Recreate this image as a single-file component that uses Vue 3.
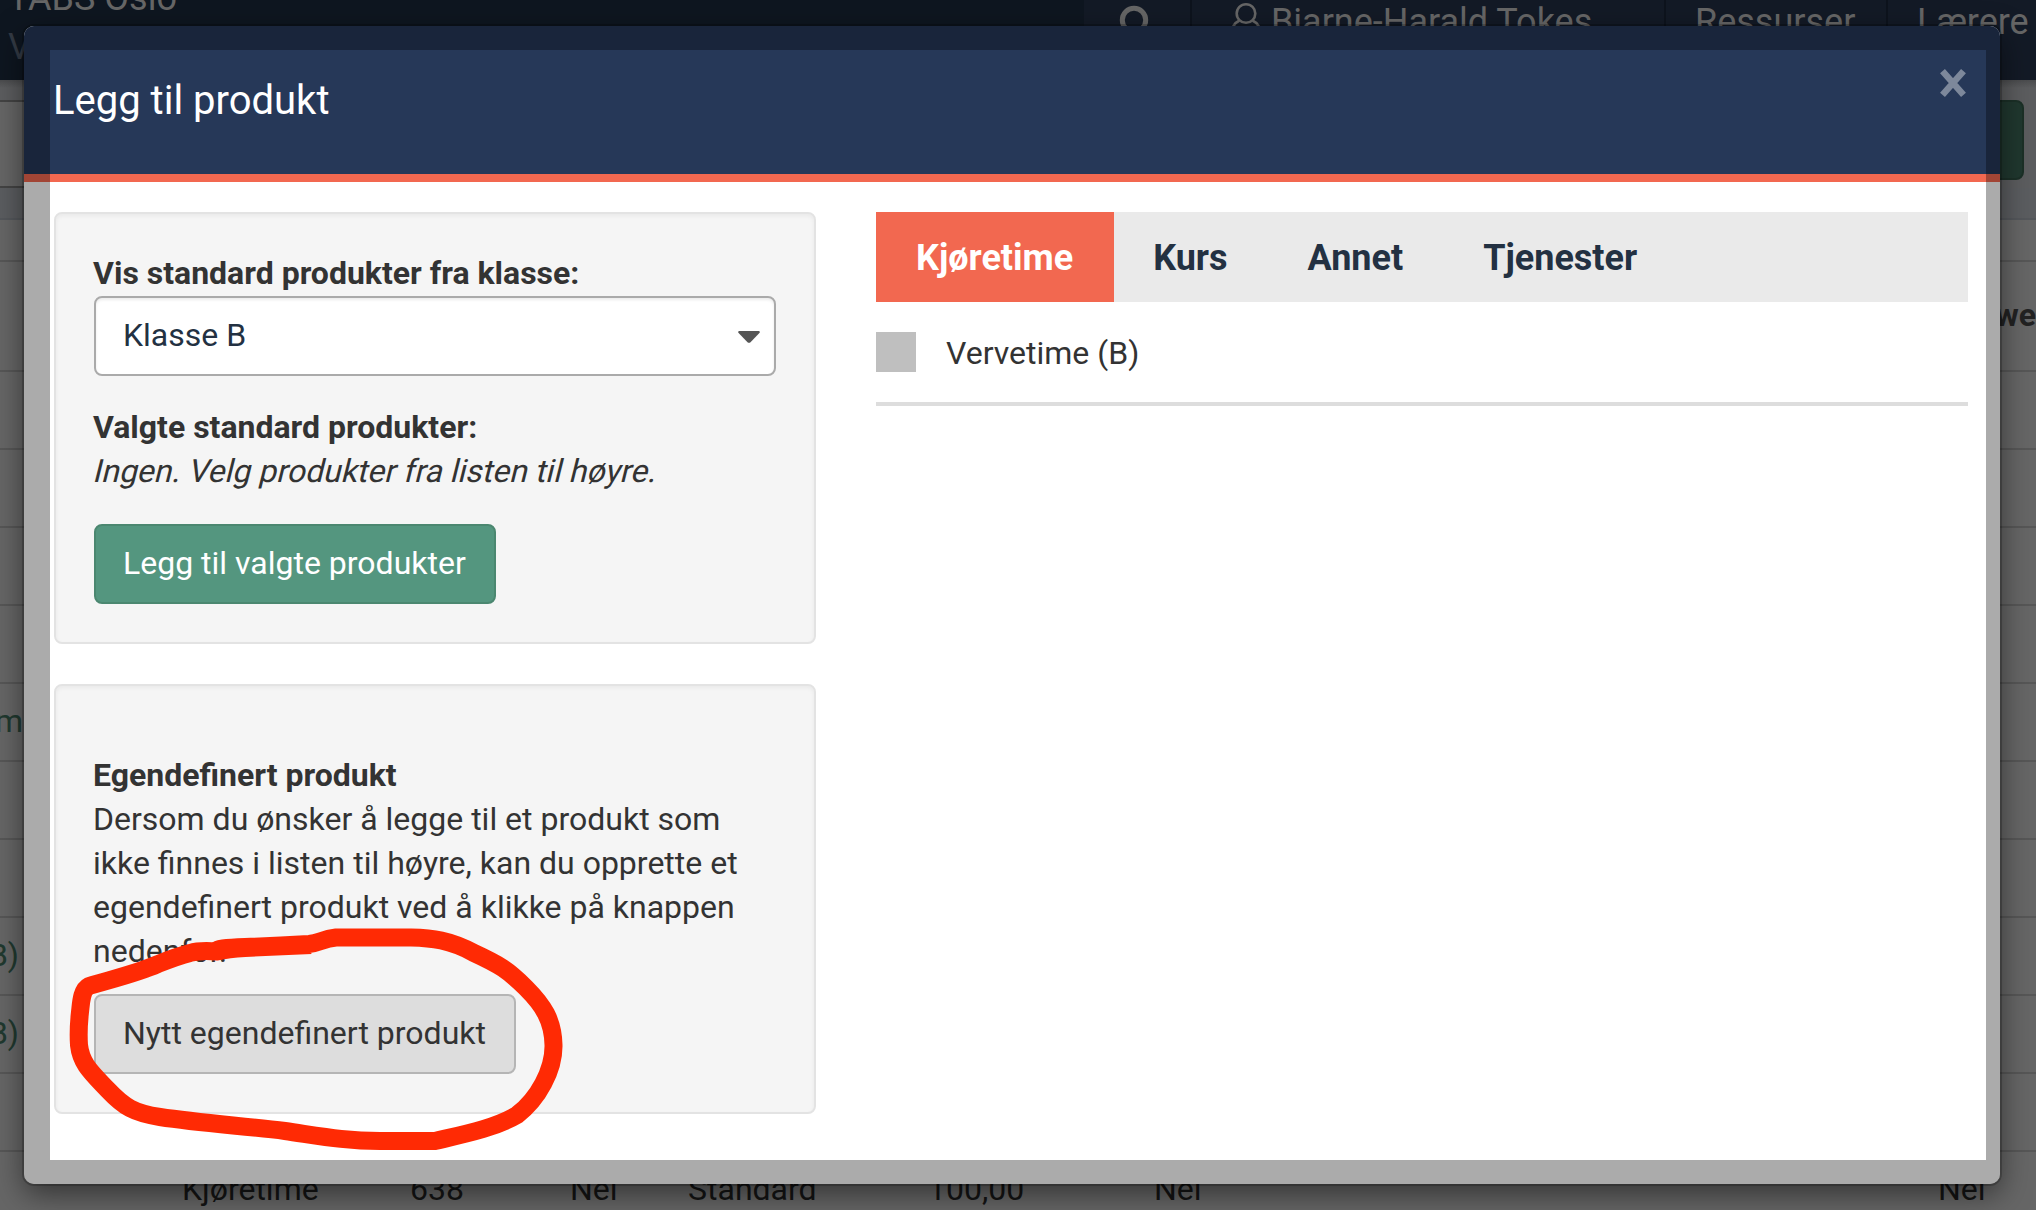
<template>
  <div class="page">
    <div class="topbar">
      <div class="brand">
        <span class="brand-name">TABS Oslo</span>
        <span class="brand-sub">V</span>
      </div>
      <nav class="nav">
        <div class="nav-item search">
          <svg width="32" height="40" viewBox="0 0 32 40">
            <circle cx="16" cy="20" r="11.7" />
            <path d="M24 28l8 9" />
          </svg>
        </div>
        <div class="nav-item user">
          <svg width="32" height="38" viewBox="0 0 32 38">
            <circle cx="16" cy="13.5" r="9.3" />
            <path d="M9.500 20.500C4 23 1.500 28 1.500 35h29c0-7-2.500-12-8-14.500" />
          </svg>
          <span>Bjarne-Harald Tokes</span>
        </div>
        <div class="nav-item resources">Ressurser</div>
        <div class="nav-item teachers">Lærere</div>
      </nav>
    </div>
    <div class="toolbar">
      <div class="toolbar-input"></div>
      <div class="toolbar-button"></div>
    </div>
    <div class="strip"></div>
    <div class="table-gap"></div>
    <div class="table-head"><b>we</b></div>
    <div v-for="(link, i) in rowLinks" :key="i" class="row">
      <span class="row-link" :class="{ wide: link === 'm' }">{{ link }}</span>
    </div>
    <div class="row last-row">
      <span v-for="(cell, i) in lastRow" :key="i" class="cell">{{ cell }}</span>
    </div>
  </div>

  <div class="modal">
    <header class="modal-header">
      <h2>Legg til produkt</h2>
      <button class="close" aria-label="Lukk">
        <svg width="28" height="30" viewBox="0 0 28 30">
          <path d="M3.500 3.200L24.500 26.800M24.500 3.200L3.500 26.800" />
        </svg>
      </button>
    </header>

    <div class="modal-body">
      <div class="left">
        <section class="well">
          <label>Vis standard produkter fra klasse:</label>
          <div class="select">
            <span>Klasse B</span>
            <svg width="22" height="12" viewBox="0 0 22 12">
              <path d="M1 0h20q1.500 .8 .4 2L12.500 11.200q-1.500 1.300-3 0L.6 2Q-.5 .8 1 0z" />
            </svg>
          </div>
          <strong>Valgte standard produkter:</strong>
          <em>Ingen. Velg produkter fra listen til høyre.</em>
          <button class="btn btn-green">Legg til valgte produkter</button>
        </section>

        <section class="well custom">
          <strong>Egendefinert produkt</strong>
          <p>Dersom du ønsker å legge til et produkt som ikke finnes i listen til høyre, kan du opprette et egendefinert produkt ved å klikke på knappen nedenfor.</p>
          <button class="btn btn-grey">Nytt egendefinert produkt</button>
        </section>
      </div>

      <div class="right">
        <div class="tabs">
          <button
            v-for="tab in tabs"
            :key="tab"
            class="tab"
            :class="{ active: tab === activeTab }"
            @click="activeTab = tab"
          >{{ tab }}</button>
        </div>
        <div class="product">
          <span class="checkbox"></span>
          <span>Vervetime (B)</span>
        </div>
      </div>
    </div>
    <div class="modal-shade"></div>
  </div>

  <svg class="marker" width="2036" height="1210" viewBox="0 0 2036 1210">
    <path d="M311 945L245 948Q228 949 217 951.500Q200 950 190 953C178 956 168 960 158 964C135 974 112 979 89 986C81 990 81 1005 80 1012Q78 1030 79 1045C81 1064 92 1073 108 1090C124 1107 134 1113 160 1117C200 1123 245 1126 285 1131C320 1136 345 1141 380 1141H435C465 1134 495 1128 517 1115C538 1099 554 1070 553.500 1045C553 1020 543 1005 526 988C508 970 500 965 474 953C450 940 432 938 411 937.500H336C322 939 320 943 309 944Q275 946 245 947T217 951" />
  </svg>
</template>

<script setup>
import { ref } from "vue"

const tabs = ["Kjøretime", "Kurs", "Annet", "Tjenester"]
const activeTab = ref("Kjøretime")

const rowLinks = ["", "", "", "", "m", "", "", "B)", "B)", ""]
const lastRow = ["Kjøretime", "638", "Nei", "Standard", "100,00", "Nei", "Nei"]
</script>

<style>
body {
  overflow: hidden;
}
</style>

<style scoped>
.page,
.modal {
  font-family: Roboto, "Liberation Sans", sans-serif;
  font-size: 32px;
  line-height: 44px;
  color: #333;
  box-sizing: border-box;
}

.page {
  width: 2036px;
  height: 1210px;
  overflow: hidden;
  background: #666;
}

.topbar {
  display: flex;
  justify-content: space-between;
  height: 80px;
  background: #0e1620;
  color: #666;
  font-size: 36px;
  overflow: hidden;
}

.brand {
  display: flex;
  flex-direction: column;
  margin-top: -25px;
  padding-left: 8px;
}

.brand-name {
  padding-top: 1px;
  line-height: 45px;
}

.brand-sub {
  color: #333a44;
  line-height: 52px;
}

.nav {
  display: flex;
  width: 952px;
  background: #131a26;
}

.nav-item {
  display: flex;
  box-sizing: border-box;
  height: 80px;
  border-right: 2px solid #0d131d;
  line-height: 44px;
  white-space: nowrap;
}

.nav-item svg {
  fill: none;
  stroke: #666;
  stroke-width: 2.6;
}

.search {
  width: 108px;
  padding-left: 34px;
}

.search svg {
  stroke-width: 5;
}

.user {
  width: 474px;
  padding-left: 38px;
  gap: 9px;
}

.resources {
  width: 222px;
  padding-left: 29px;
}

.teachers {
  padding-left: 29px;
  border-right: none;
}

.toolbar {
  display: flex;
  justify-content: space-between;
  box-sizing: border-box;
  height: 108px;
  padding-top: 20px;
  background: linear-gradient(#4b4c4e, #5c5d5f 8px);
}

.toolbar-input {
  box-sizing: border-box;
  width: 60px;
  height: 88px;
  border: solid #444;
  border-width: 2px 0;
  background: #666;
}

.toolbar-button {
  box-sizing: border-box;
  width: 80px;
  height: 80px;
  margin-right: 12px;
  border: 2px solid #1b3027;
  border-radius: 8px;
  background: #20382f;
}

.strip {
  box-sizing: border-box;
  height: 32px;
  background: #5b5d60;
  border-bottom: 2px solid #54575b;
}

.table-gap {
  height: 40px;
}

.table-head {
  display: flex;
  justify-content: flex-end;
  align-items: center;
  box-sizing: border-box;
  height: 110px;
  padding-bottom: 2px;
  border-top: 2px solid #575757;
  color: #222;
}

.row {
  display: flex;
  box-sizing: border-box;
  height: 78px;
  padding-top: 15px;
  border-top: 2px solid #575757;
}

.row-link {
  display: flex;
  justify-content: flex-end;
  width: 19px;
  color: #20392f;
}

.row-link.wide {
  width: 23px;
}

.last-row {
  display: grid;
  grid-template-columns: 228px 160px 118px 240px 226px 784px 97px;
  padding-left: 182px;
  color: #141414;
}

.modal {
  position: absolute;
  top: 26px;
  left: 24px;
  width: 1976px;
  height: 1158px;
  overflow: hidden;
  border-radius: 10px;
  background: #fff;
  box-shadow: 0 0 0 2px rgba(0, 0, 0, 0.2), 0 10px 30px rgba(0, 0, 0, 0.5);
}

.modal-header {
  display: flex;
  justify-content: space-between;
  box-sizing: border-box;
  height: 156px;
  padding: 42px 33px 0 29px;
  border-bottom: 8px solid #f26850;
  background: #263858;
}

h2 {
  margin: 9px 0 0;
  color: #fff;
  font-size: 40px;
  font-weight: 400;
  line-height: 48px;
}

.close {
  align-self: flex-start;
  display: flex;
  padding: 0;
  border: none;
  background: none;
}

.close path {
  fill: none;
  stroke: #7d889b;
  stroke-width: 6.5;
}

.modal-body {
  display: flex;
  gap: 60px;
  padding: 30px 32px 0 30px;
}

.left {
  display: flex;
  flex-direction: column;
  gap: 40px;
  width: 762px;
}

.well {
  display: flex;
  flex-direction: column;
  box-sizing: border-box;
  height: 432px;
  padding: 37px 38px 0;
  border: 2px solid #e3e3e3;
  border-radius: 8px;
  background: #f5f5f5;
  box-shadow: inset 0 2px 4px rgba(0, 0, 0, 0.05);
}

.well label,
.well strong,
.well p {
  margin-left: -1px;
}

.well label,
.well strong {
  font-weight: 700;
}

/* slanted regular face, keeps the widths of upright text */
.well em {
  align-self: flex-start;
  margin-left: -2px;
  font-style: normal;
  transform: skewX(-14deg);
  transform-origin: 0 33px;
}

.well.custom {
  height: 430px;
  padding-top: 67px;
}

.well p {
  margin-top: 0;
  margin-bottom: 21px;
}

.select {
  display: flex;
  align-items: center;
  justify-content: space-between;
  box-sizing: border-box;
  height: 80px;
  margin: 1px 0 29px;
  padding: 0 14px 2px 27px;
  border: 2px solid #aaa;
  border-radius: 8px;
  background: #fff;
  box-shadow: inset 0 2px 3px rgba(0, 0, 0, 0.08);
  color: #233142;
}

.select svg {
  margin-top: 4px;
  fill: #555;
}

.btn {
  align-self: flex-start;
  box-sizing: border-box;
  height: 80px;
  padding: 0 28px 2px 27px;
  border: 2px solid #4b8770;
  border-radius: 8px;
  font: inherit;
  white-space: nowrap;
}

.btn-green {
  margin-top: 31px;
  background: #54967f;
  color: #fff;
}

.btn-grey {
  border-color: #b5b5b5;
  background: #ddd;
  color: #333;
}

.right {
  flex: 1;
}

.tabs {
  display: flex;
  height: 90px;
  background: #eaeaea;
}

.tab {
  padding: 2px 40px 0;
  border: none;
  background: none;
  color: #233142;
  font: inherit;
  font-size: 36px;
  font-weight: 700;
}

.tab.active {
  margin-right: -1px;
  padding-right: 41px;
  background: #f26850;
  color: #fff;
}

.product {
  display: flex;
  align-items: center;
  gap: 30px;
  height: 100px;
  border-bottom: 4px solid #ddd;
}

.product span:last-child {
  padding-top: 2px;
}

.checkbox {
  width: 40px;
  height: 40px;
  background: #bfbfbf;
}

/* dimmed edge around the modal content */
.modal-shade {
  position: absolute;
  inset: 0;
  border: solid rgba(0, 0, 0, 0.33);
  border-width: 24px 14px 24px 26px;
  pointer-events: none;
}

.marker {
  position: absolute;
  top: 0;
  left: 0;
  pointer-events: none;
}

.marker path {
  fill: none;
  stroke: #ff2a04;
  stroke-width: 18;
  stroke-linejoin: round;
}
</style>
